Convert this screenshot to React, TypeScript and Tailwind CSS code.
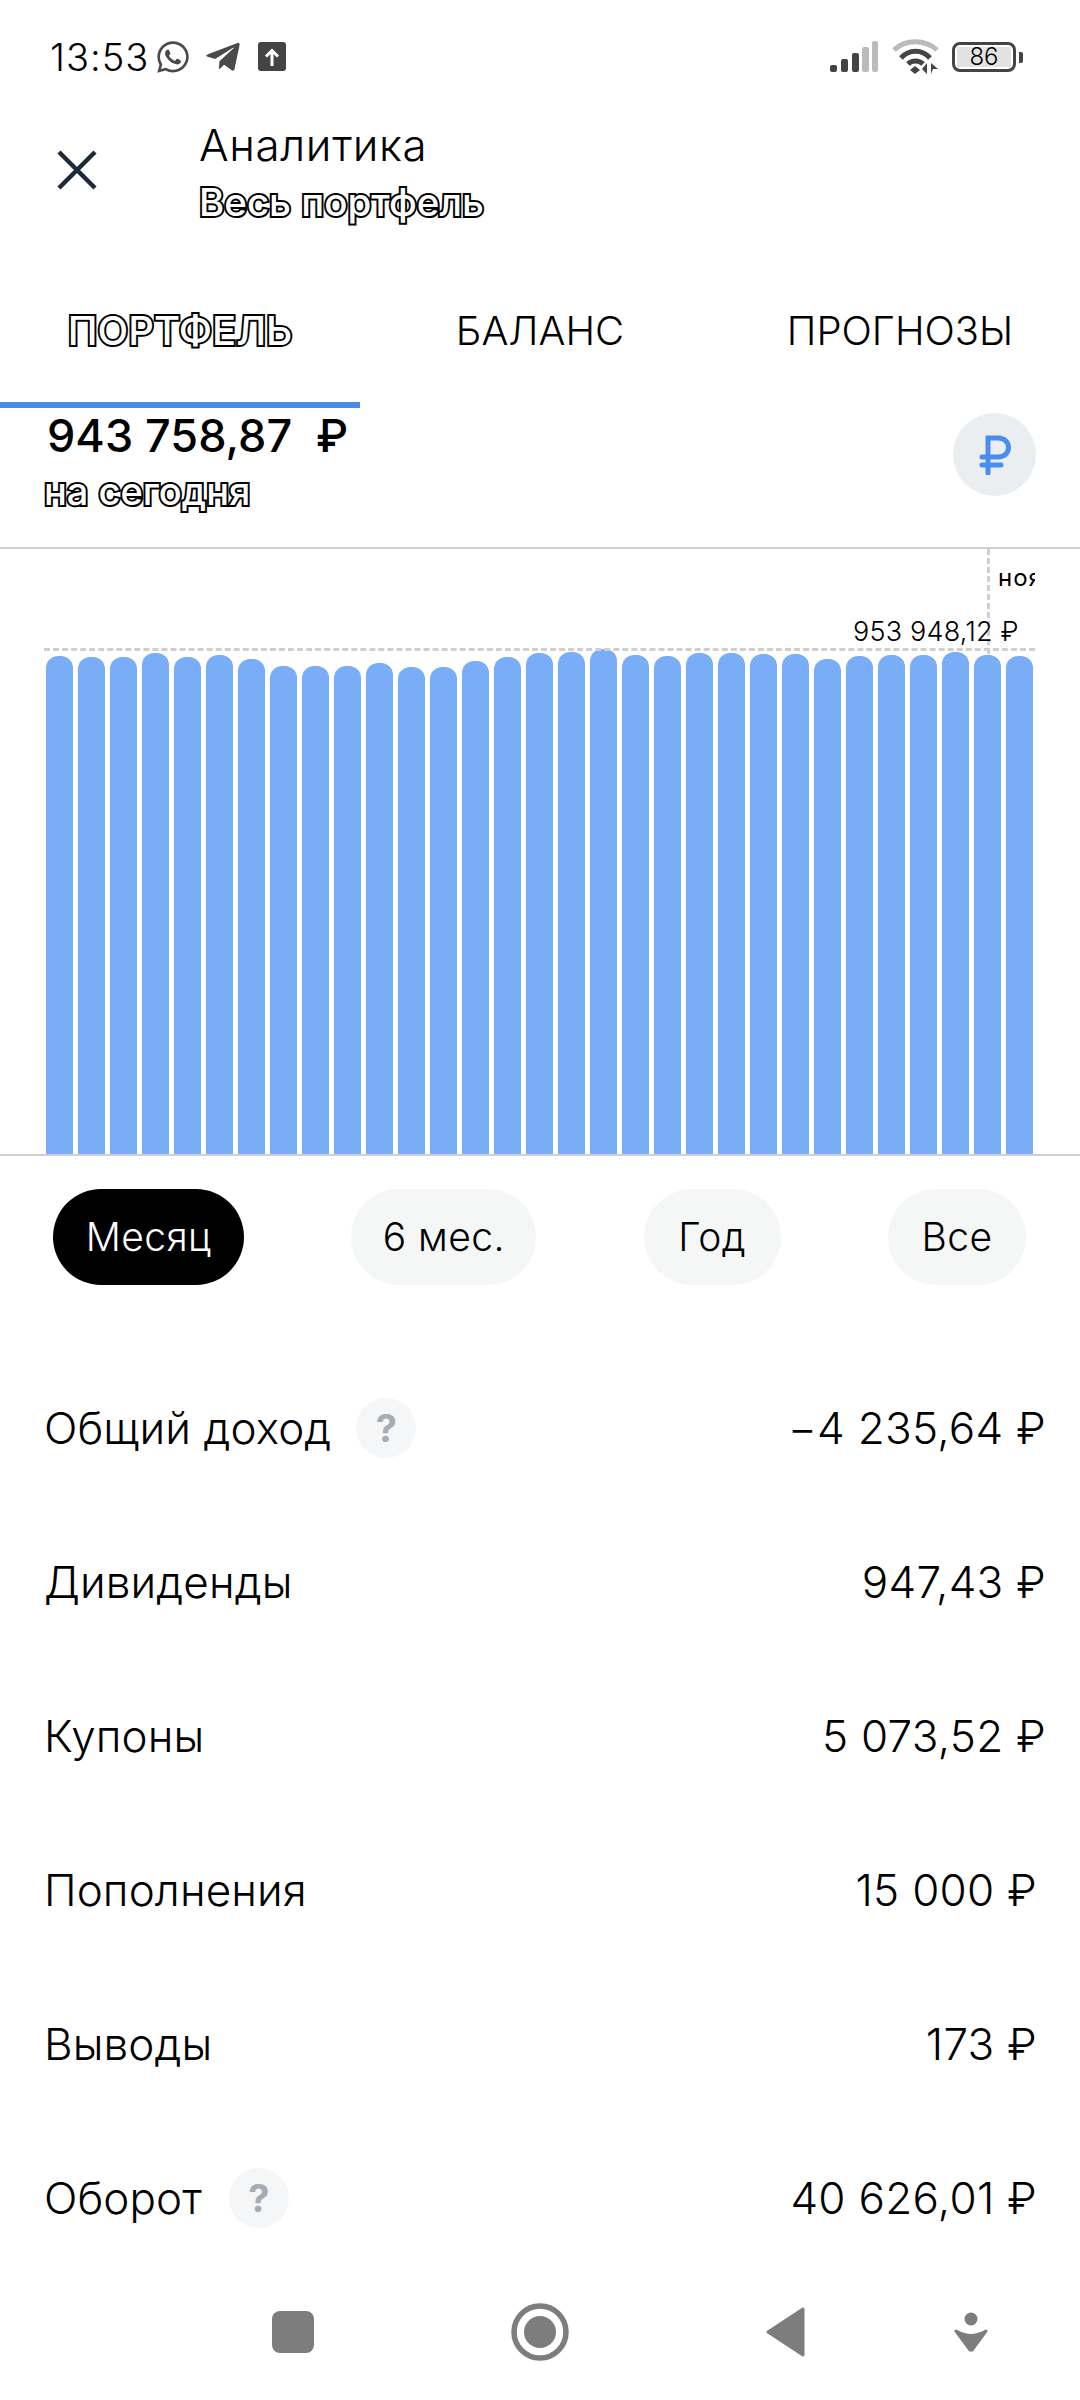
import React from "react";
import { FaWhatsapp, FaTelegramPlane } from "react-icons/fa";

const tops = [656,656.7,656.7,653,657,655.3,659,666,666,666,662.7,666.7,667,661.3,657,652.7,652.3,649,655,656,652.7,653,654,654.3,659.3,656.3,655,655,652,655,656];
const chartBottom = 1154;

const outline = "text-white [-webkit-text-stroke:4px_black] [paint-order:stroke_fill]";

function StatusBar() {
  return (
    <div className="h-[114px] flex items-center justify-between pl-[50px] pr-[57px] shrink-0">
      <div className="flex items-center">
        <span className="text-[38px] font-light text-black tracking-[1px] leading-none">13:53</span>
        <FaWhatsapp className="ml-[6px] text-[#4a4a4a]" size={36} />
        <FaTelegramPlane className="ml-[13px] text-[#4a4a4a]" size={38} />
        <svg className="ml-[16px]" width="28" height="30" viewBox="0 0 28 30">
          <rect width="28" height="29" rx="3" fill="#444" />
          <path d="M14 24V9M8 14.5L14 8.5L20 14.5" stroke="#fff" strokeWidth="3" fill="none" />
        </svg>
      </div>
      <div className="flex items-center">
        <svg width="48" height="32" viewBox="0 0 48 32">
          <rect x="0" y="24" width="7" height="7" rx="2" fill="#444" />
          <rect x="11" y="18" width="7" height="13" rx="2" fill="#444" />
          <rect x="22" y="12" width="7" height="19" rx="2" fill="#444" />
          <rect x="32" y="6" width="7" height="25" rx="2" fill="#bbb" />
          <rect x="42" y="0" width="6" height="31" rx="2" fill="#bbb" />
        </svg>
        <svg className="ml-[14px]" width="48" height="36" viewBox="0 0 48 36">
          <path d="M2 11C13 0 33 0 45 11" stroke="#bbb" strokeWidth="5" fill="none" />
          <path d="M9 19C17 10 30 10 38 19" stroke="#444" strokeWidth="5" fill="none" />
          <path d="M16 25C20 21 27 21 31 25" stroke="#444" strokeWidth="5" fill="none" />
          <path d="M18 31L23 27L28 31L23 35Z" fill="#444" />
          <path d="M35 24V35L30 30Z M39 35V24L46 30H41Z" fill="#444" />
        </svg>
        <div className="ml-[12px] w-[64px] h-[30px] rounded-[8px] border-[3px] border-[#444] flex items-center justify-center p-[2px]">
          <div className="w-full h-full bg-[#e2e2e2] flex items-center justify-center">
            <span className="text-[24px] font-light leading-none text-black">86</span>
          </div>
        </div>
        <div className="ml-[3px] w-[4px] h-[11px] rounded-r-[2px] bg-[#444]" />
      </div>
    </div>
  );
}

function Header() {
  return (
    <div className="h-[124px] flex items-center shrink-0">
      <svg className="ml-[57px] -mt-[12px]" width="40" height="40" viewBox="0 0 40 40">
        <path d="M2 2L38 38M38 2L2 38" stroke="#1f2937" strokeWidth="4.5" />
      </svg>
      <div className="ml-[102px] flex flex-col -mt-[4px]">
        <div className="h-[54px] leading-[54px] text-[44px] tracking-[0.6px] font-light text-black">Аналитика</div>
        <div className={`mt-[2px] h-[56px] leading-[56px] text-[38.500px] font-medium ${outline}`}>Весь портфель</div>
      </div>
    </div>
  );
}

function Tabs() {
  return (
    <div className="h-[170px] flex shrink-0">
      <div className={`w-[360px] h-full flex items-center justify-center pt-[22px] border-b-[6px] border-[#4a8ae6] text-[40px] font-medium ${outline}`}>ПОРТФЕЛЬ</div>
      <div className="w-[360px] h-full flex items-center justify-center pt-[22px] pb-[6px] text-[40px] font-light text-black">БАЛАНС</div>
      <div className="w-[360px] h-full flex items-center justify-center pt-[22px] pb-[6px] text-[40px] font-light text-black">ПРОГНОЗЫ</div>
    </div>
  );
}

function Amount() {
  return (
    <div className="h-[141px] flex items-start justify-between border-b-[2px] border-[#cfcfcf] shrink-0">
      <div className="pl-[44px] flex flex-col">
        <div className="pl-[3px] h-[56px] leading-[56px] text-[45px] font-medium text-black whitespace-pre">943 758,87  ₽</div>
        <div className={`-mt-[3px] h-[60px] leading-[60px] text-[38px] font-medium ${outline}`}>на сегодня</div>
      </div>
      <div className="mt-[5px] mr-[44px] w-[83px] h-[83px] rounded-full bg-[#ebeef0] flex items-center justify-center">
        <svg width="32" height="40" viewBox="0 0 32 40">
          <path d="M9 38V3H19C33 3 33 22 19 22H3M3 30H22" stroke="#4a8df0" strokeWidth="5" strokeLinecap="round" fill="none" />
        </svg>
      </div>
    </div>
  );
}

function Chart() {
  return (
    <div className="relative h-[607px] border-b-[2px] border-[#cfcfcf] shrink-0 overflow-hidden">
      <div className="h-full pl-[46px] flex items-end gap-[5px]">
        {tops.map((t, i) => (
          <div key={i} className="w-[27px] rounded-t-[12px] bg-[#7aadf8]" style={{ height: chartBottom - t }} />
        ))}
      </div>
      <div className="absolute left-[44px] w-[991px] top-[99px] border-t-[3px] border-dashed border-[#cfcfcf]" />
      <div className="absolute left-[987px] top-0 h-[105px] border-l-[3px] border-dashed border-[#cfcfcf]" />
      <div className="absolute left-[998px] top-[14px] w-[37px] h-[30px] overflow-hidden text-[24px] tracking-[1px] leading-[30px] text-black whitespace-nowrap">ноябрь</div>
      <div className="absolute left-[853px] top-[65px] text-[27px] tracking-[0.2px] leading-[36px] font-light text-black whitespace-nowrap">953 948,12 ₽</div>
    </div>
  );
}

function Pills() {
  const items = [
    { t: "Месяц", w: "w-[191px]", c: "bg-black text-white" },
    { t: "6 мес.", w: "w-[185px]", c: "bg-[#f5f7f7] text-black" },
    { t: "Год", w: "w-[137px]", c: "bg-[#f5f7f7] text-black" },
    { t: "Все", w: "w-[138px]", c: "bg-[#f5f7f7] text-black" },
  ];
  return (
    <div className="mt-[33px] pl-[53px] pr-[54px] flex justify-between shrink-0">
      {items.map((p) => (
        <div key={p.t} className={`${p.w} ${p.c} h-[96px] rounded-full flex items-center justify-center text-[39px] tracking-[0.4px] font-light`}>{p.t}</div>
      ))}
    </div>
  );
}

function Help({ ml }: { ml: string }) {
  return (
    <div className={`${ml} w-[60px] h-[60px] rounded-full bg-[#f5f6f7] flex items-center justify-center text-[38px] font-bold text-[#a7abb3]`}>?</div>
  );
}

function Rows() {
  const rows = [
    { l: "Общий доход", v: "−4 235,64 ₽", pr: "pr-[34px]", help: "ml-[25px]" },
    { l: "Дивиденды", v: "947,43 ₽", pr: "pr-[34px]" },
    { l: "Купоны", v: "5 073,52 ₽", pr: "pr-[34px]" },
    { l: "Пополнения", v: "15 000 ₽", pr: "pr-[43px]" },
    { l: "Выводы", v: "173 ₽", pr: "pr-[43px]" },
    { l: "Оборот", v: "40 626,01 ₽", pr: "pr-[43px]", help: "ml-[27px]" },
  ];
  return (
    <div className="mt-[66px] flex flex-col shrink-0">
      {rows.map((r) => (
        <div key={r.l} className={`h-[154px] pl-[44px] ${r.pr} flex items-center justify-between text-[44px] font-light text-black`}>
          <div className="flex items-center">
            <span className="tracking-[0.1px]">{r.l}</span>
            {r.help && <Help ml={r.help} />}
          </div>
          <span className="tracking-[0.3px]">{r.v}</span>
        </div>
      ))}
    </div>
  );
}

function Nav() {
  return (
    <div className="h-[114px] pl-[272px] flex items-center shrink-0">
      <div className="w-[42px] h-[42px] rounded-[8px] bg-[#7d7d7d]" />
      <svg className="ml-[197px]" width="58" height="58" viewBox="0 0 58 58">
        <circle cx="29" cy="29" r="26" stroke="#7d7d7d" strokeWidth="5.5" fill="none" />
        <circle cx="29" cy="29" r="16" fill="#7d7d7d" />
      </svg>
      <svg className="ml-[197px]" width="39" height="50" viewBox="0 0 39 50">
        <path d="M37 2L2 25L37 48Z" fill="#7d7d7d" stroke="#7d7d7d" strokeWidth="3" strokeLinejoin="round" />
      </svg>
      <svg className="ml-[149px]" width="34" height="40" viewBox="0 0 34 40">
        <circle cx="17" cy="7" r="6.5" fill="#7d7d7d" />
        <path d="M2 19C8 22 12 23.500 17 23.500C22 23.500 26 22 32 19L18 38H16Z" fill="#7d7d7d" stroke="#7d7d7d" strokeWidth="3" strokeLinejoin="round" />
      </svg>
    </div>
  );
}

export default function App() {
  return (
    <div className="w-[1080px] h-[2400px] bg-white overflow-hidden flex flex-col font-['Inter','Noto_Sans',sans-serif]">
      <StatusBar />
      <Header />
      <Tabs />
      <Amount />
      <Chart />
      <Pills />
      <Rows />
      <Nav />
    </div>
  );
}
